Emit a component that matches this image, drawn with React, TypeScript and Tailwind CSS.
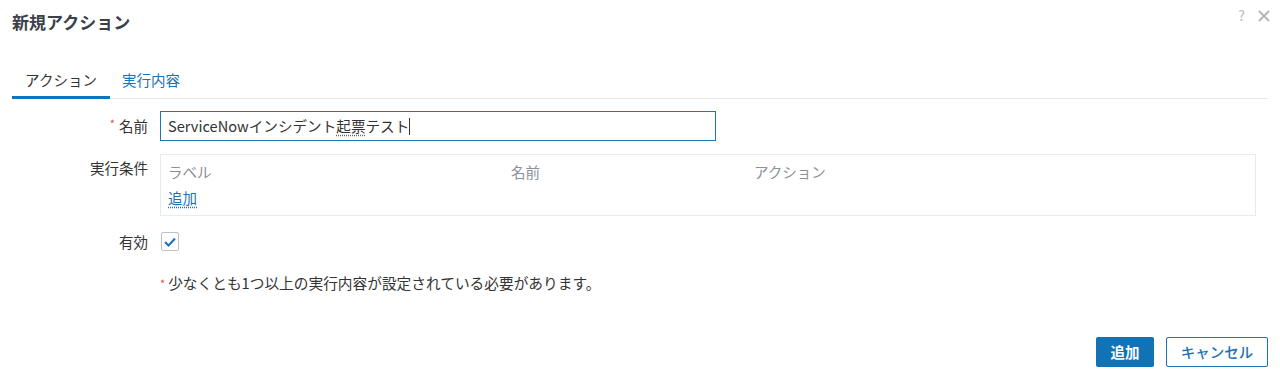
import React from "react";

export default function App() {
  return (
    <div
      className="w-[1280px] h-[375px] bg-white relative text-[#333] overflow-hidden"
      style={{ fontFamily: '"Noto Sans CJK JP", "Noto Sans", sans-serif' }}
    >
      <div className="absolute right-[10px] top-[5px] flex items-center gap-[13px] text-[#b6bcc2]">
        <span className="text-[14px]">?</span>
        <svg width="12" height="12" viewBox="0 0 12 12" stroke="#b0b6bc" strokeWidth="1.8">
          <path d="M1 1 L11 11 M11 1 L1 11" />
        </svg>
      </div>
      <div className="px-[12px] pt-[10px]">
        <h1 className="text-[17px] font-bold text-[#3a4148] leading-[24px]">新規アクション</h1>
      </div>
      <div className="mx-[12px] mt-[35px] flex border-b border-[#e6e8ea] text-[14.5px]">
        <div className="w-[98px] text-center pb-[5px] border-b-[3px] border-[#1274b8] -mb-px text-[#333] leading-[22px]">
          アクション
        </div>
        <div className="px-[12px] pb-[5px] text-[#1a73b5] leading-[22px]">実行内容</div>
      </div>

      <div className="mt-[12px] flex flex-col text-[14.5px]">
        <div className="flex items-center">
          <div className="w-[148px] text-right pr-[0px]">
            <span className="text-[#e05050] text-[11px] align-top mr-[4px]">*</span>名前
          </div>
          <div className="ml-[12px] w-[556px] h-[30px] border border-[#1a77b9] flex items-center px-[7px] text-[14.6px] text-[#333]">
            <span>ServiceNowインシデント</span>
            <span className="underline decoration-dotted decoration-[#666] underline-offset-[3px]">起票</span>
            <span>テスト</span>
            <span className="w-px h-[17px] bg-[#333]"></span>
          </div>
        </div>

        <div className="flex mt-[13px]">
          <div className="w-[148px] text-right pt-[3px]">実行条件</div>
          <div className="ml-[12px] w-[1096px] h-[62px] border border-[#e8eaec] px-[7px] pt-[7px]">
            <div className="flex text-[#8a9097] leading-[20px]">
              <div className="w-[343px]">ラベル</div>
              <div className="w-[243px]">名前</div>
              <div>アクション</div>
            </div>
            <div className="mt-[6px] leading-[20px]">
              <span className="text-[#1a73b5] underline decoration-dotted decoration-[#1a73b5] underline-offset-[3px]">追加</span>
            </div>
          </div>
        </div>

        <div className="flex items-center mt-[15px]">
          <div className="w-[148px] text-right">有効</div>
          <div className="ml-[13px] w-[18px] h-[19px] border border-[#b9c1c9] rounded-[2px] flex items-center justify-center">
            <svg width="12" height="10" viewBox="0 0 12 10" fill="none" stroke="#1a73b5" strokeWidth="2">
              <path d="M1 5 L4.5 8.5 L11 1.5" />
            </svg>
          </div>
        </div>

        <div className="ml-[160px] mt-[20px] leading-[20px] text-[14.7px]">
          <span className="text-[#e05050] text-[11px] align-top mr-[3px]">*</span>少なくとも1つ以上の実行内容が設定されている必要があります。
        </div>
      </div>

      <div className="absolute right-[12px] bottom-[8px] flex gap-[12px] text-[14.5px]">
        <button className="w-[58px] h-[30px] bg-[#0f73b6] text-white rounded-[2px] font-bold">追加</button>
        <button className="w-[102px] h-[30px] border border-[#1a73b5] text-[#1a73b5] rounded-[2px] font-medium bg-white">キャンセル</button>
      </div>
    </div>
  );
}
